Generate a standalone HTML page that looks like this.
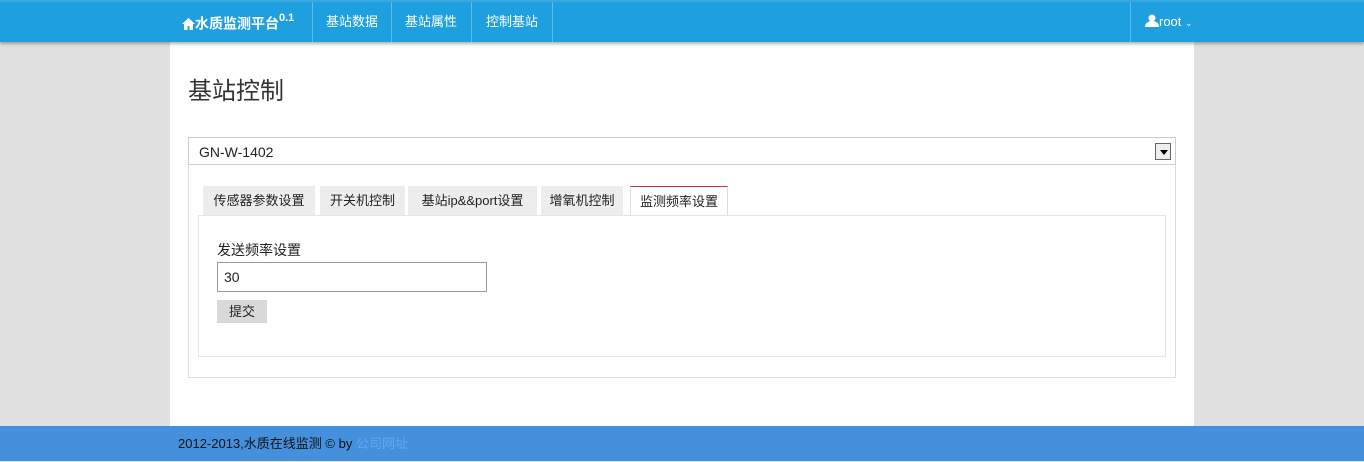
<!DOCTYPE html>
<html><head><meta charset="utf-8"><style>
*{box-sizing:border-box;margin:0;padding:0}
body{width:1364px;height:461px;background:#e1e1e1;font-family:"Liberation Sans","Noto Sans CJK SC",sans-serif;font-size:13px;color:#222;position:relative;overflow:hidden}
.nav{position:absolute;left:0;top:0;width:1364px;height:42px;background:#1ea0e0;border-top:2px solid #3aa9e0;box-shadow:0 2px 3px rgba(0,0,0,.3);z-index:2}
.nav .it{position:absolute;top:0;height:40px;line-height:40px;color:#fff;border-right:1px solid #5dbbe8}
.brand{left:182px;font-weight:bold;font-size:14px;border-right:none!important;line-height:36px!important}
.brand sup{font-size:11px;position:relative;top:-2px}
.main{position:absolute;left:170px;top:42px;width:1024px;height:384px;background:#fff}
h1{position:absolute;left:18px;top:29px;font-size:24px;font-weight:normal;color:#333}
.sel{position:absolute;left:18px;top:95px;width:988px;height:28px;border:1px solid #ccc;font-size:14px;line-height:28px;padding-left:10px}
.dd{position:absolute;right:4px;top:5px;width:16px;height:17px;border:1px solid #666;background:#eee}
.dd:after{content:"";position:absolute;left:4px;top:6px;border:4px solid transparent;border-top:5px solid #000}
.panel{position:absolute;left:18px;top:123px;width:988px;height:213px;border:1px solid #ddd;border-top:none}
.tab{position:absolute;top:144px;height:29px;line-height:29px;background:#ededed;text-align:center;font-size:13px;white-space:nowrap}
.tab.act{background:#fff;border-top:1px solid #c33;border-left:1px solid #ddd;border-right:1px solid #ddd;height:30px}
.inner{position:absolute;left:28px;top:173px;width:968px;height:142px;border:1px solid #e5e5e5}
.foot{position:absolute;left:0;top:426px;width:1364px;height:35px;background:#4590dc;line-height:36px;padding-left:178px;font-size:13px;color:#111}
</style></head><body>
<div class="nav">
<div class="it brand"><svg width="13" height="12" viewBox="0 0 13 12" style="vertical-align:-1px"><path d="M6.5 0L0 6h2v6h3.5V8h2v4H11V6h2z" fill="#fff"/></svg>水质监测平台<sup>0.1</sup></div>
<div class="it" style="left:312px;border-left:1px solid #5dbbe8;padding:0 13px">基站数据</div>
<div class="it" style="left:391px;padding:0 14px">基站属性</div>
<div class="it" style="left:472px;padding:0 14px">控制基站</div>
<div class="it" style="left:1130px;border-left:1px solid #5dbbe8;border-right:none;padding-left:14px"><svg width="14" height="13" viewBox="0 0 14 13" style="vertical-align:-1px"><circle cx="7" cy="4" r="3.5" fill="#fff"/><path d="M0 13c0-4 3-6 7-6s7 2 7 6z" fill="#fff"/></svg>root <span style="font-size:9px">&#8964;</span></div>
</div>
<div class="main">
<h1>基站控制</h1>
<div class="sel">GN-W-1402<div class="dd"></div></div>
<div class="panel"></div>
<div class="tab" style="left:33px;width:112px">传感器参数设置</div>
<div class="tab" style="left:150px;width:85px">开关机控制</div>
<div class="tab" style="left:238px;width:129px">基站ip&amp;&amp;port设置</div>
<div class="tab" style="left:371px;width:82px">增氧机控制</div>
<div class="tab act" style="left:460px;width:98px">监测频率设置</div>
<div class="inner">
<div style="position:absolute;left:18px;top:24px;font-size:14px">发送频率设置</div>
<div style="position:absolute;left:18px;top:46px;width:270px;height:30px;border:1px solid #999;line-height:28px;padding-left:6px;font-size:14px">30</div>
<div style="position:absolute;left:18px;top:84px;width:50px;height:23px;background:#d9d9d9;text-align:center;line-height:23px">提交</div>
</div>
</div>
<div class="foot">2012-2013,水质在线监测 © by <span style="color:#62a8ee">公司网址</span></div>
</body></html>
